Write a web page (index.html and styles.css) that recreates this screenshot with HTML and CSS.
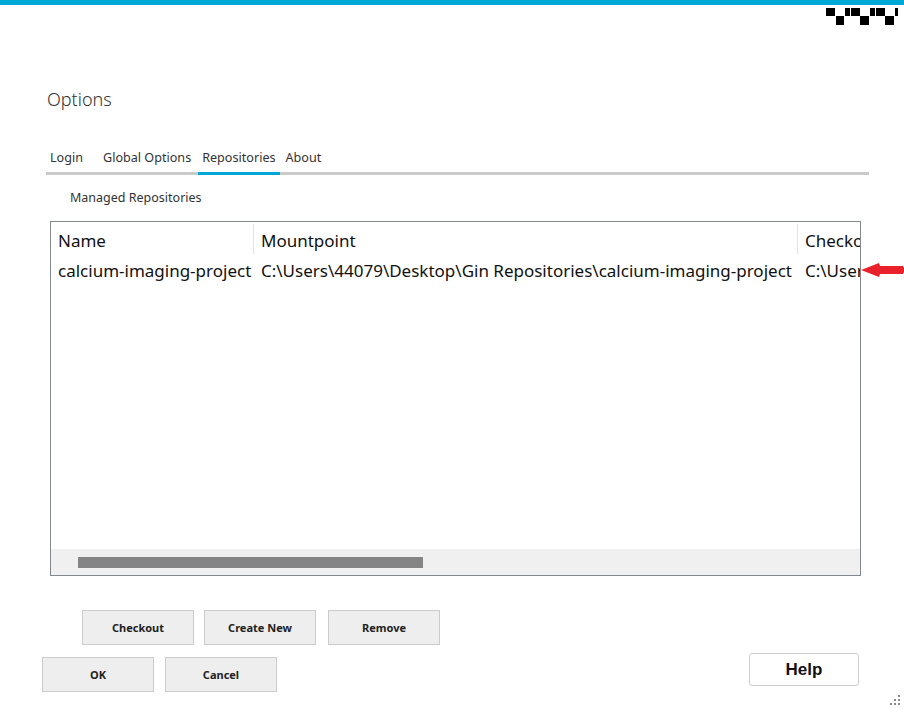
FILE: index.html
```html
<!DOCTYPE html>
<html>
<head>
<meta charset="utf-8">
<link rel="stylesheet" href="styles.css">
</head>
<body>
<div class="topbar"></div>
<svg class="winctl" width="74" height="18" viewBox="0 0 74 18">
  <g fill="#000">
    <rect x="1" y="0" width="9" height="8"/>
    <rect x="20" y="0" width="5" height="8"/>
    <rect x="26" y="0" width="9" height="8"/>
    <rect x="45" y="0" width="5" height="8"/>
    <rect x="51" y="0" width="9" height="8"/>
    <rect x="70" y="0" width="3" height="8"/>
    <rect x="11" y="8" width="8" height="9"/>
    <rect x="35" y="8" width="9" height="9"/>
    <rect x="60" y="8" width="9" height="9"/>
  </g>
</svg>
<main class="dialog">
  <h1 class="title">Options</h1>
  <nav class="tabs">
    <span class="tab t-login">Login</span>
    <span class="tab t-global">Global Options</span>
    <span class="tab t-repo active">Repositories</span>
    <span class="tab t-about">About</span>
  </nav>
  <div class="section-label">Managed Repositories</div>
  <div class="listbox">
    <div class="grid">
      <div class="hcell c1">Name</div>
      <div class="hcell c2">Mountpoint</div>
      <div class="hcell c3">Checkout</div>
      <div class="cell c1">calcium-imaging-project</div>
      <div class="cell c2">C:\Users\44079\Desktop\Gin Repositories\calcium-imaging-project</div>
      <div class="cell c3">C:\Users\44079\Desktop</div>
    </div>
    <div class="hscroll"><div class="thumb"></div></div>
  </div>
  <div class="actions">
    <button class="btn">Checkout</button>
    <button class="btn">Create New</button>
    <button class="btn b-remove">Remove</button>
  </div>
  <div class="footer">
    <div class="okcancel">
      <button class="btn">OK</button>
      <button class="btn">Cancel</button>
    </div>
    <button class="help">Help</button>
  </div>
</main>
<svg class="arrow" width="44" height="16" viewBox="0 0 44 16">
  <polygon points="0,8 18,1 19,4 42,4 43,6 43,10 42,12 19,12 18,15" fill="#e8212b"/>
</svg>
<svg class="grip" width="12" height="12" viewBox="0 0 12 12">
  <g fill="#8a8a8a">
    <rect x="8" y="0" width="2" height="2"/>
    <rect x="4" y="4" width="2" height="2"/>
    <rect x="8" y="4" width="2" height="2"/>
    <rect x="0" y="8" width="2" height="2"/>
    <rect x="4" y="8" width="2" height="2"/>
    <rect x="8" y="8" width="2" height="2"/>
  </g>
</svg>
</body>
</html>
```
FILE: styles.css
```css
html, body {
  margin: 0;
  padding: 0;
  background: #ffffff;
  width: 904px;
  height: 708px;
  overflow: hidden;
  position: relative;
  font-family: "Noto Sans", "Open Sans", sans-serif;
  color: #222;
}
.topbar {
  height: 5px;
  background: #00a8d6;
}
.winctl {
  position: absolute;
  left: 825px;
  top: 8px;
}
.dialog {
  padding: 0 0 0 42px;
  display: flex;
  flex-direction: column;
}
.title {
  margin: 82px 0 0 5px;
  font-size: 18px;
  font-weight: 300;
  color: #333;
  line-height: 24px;
  height: 24px;
}
.tabs {
  margin: 31px 0 0 4px;
  width: 823px;
  height: 30px;
  border-bottom: 3px solid #cacaca;
  display: flex;
  position: relative;
  box-sizing: content-box;
}
.tab {
  font-size: 12.6px;
  color: #333;
  line-height: 28px;
  padding: 2px 4px 0 4px;
  position: relative;
}
.t-login { margin-left: 0; }
.t-global { margin-left: 12px; }
.t-repo { margin-left: 3px; }
.t-about { margin-left: 2px; }
.tab.active::after {
  content: "";
  position: absolute;
  left: 0;
  right: 0;
  bottom: -3px;
  height: 3px;
  background: #00a8d6;
}
.section-label {
  margin: 13px 0 0 28px;
  font-size: 12.5px;
  color: #333;
  line-height: 20px;
}
.listbox {
  margin: 13px 0 0 8px;
  width: 809px;
  height: 353px;
  border: 1px solid #828790;
  display: flex;
  flex-direction: column;
  overflow: hidden;
}
.grid {
  flex: 1;
  display: grid;
  grid-template-columns: 203px 544px 200px;
  grid-template-rows: 33px 30px;
  align-content: start;
  font-size: 17px;
  color: #111;
  white-space: nowrap;
}
.hcell {
  padding-left: 7px;
  border-right: 1px solid #e3e3e3;
  margin: 2px 0 1px 0;
  padding-top: 1px;
  line-height: 31px;
  overflow: hidden;
}
.cell {
  padding-left: 7px;
  padding-top: 2px;
  line-height: 28px;
  overflow: hidden;
}
.hscroll {
  height: 26px;
  background: #f0f0f0;
  display: flex;
  align-items: center;
}
.thumb {
  margin-left: 27px;
  width: 345px;
  height: 11px;
  background: #858585;
}
.actions {
  margin: 34px 0 0 40px;
  display: flex;
  gap: 10px;
}
.b-remove { margin-left: 2px; }
.btn {
  width: 112px;
  height: 35px;
  background: #eeeeee;
  border: 1px solid #cccccc;
  font-family: "Noto Sans", "Open Sans", sans-serif;
  font-size: 11px;
  font-weight: bold;
  color: #222;
  padding: 0;
}
.footer {
  margin-top: 12px;
  display: flex;
  justify-content: space-between;
  align-items: flex-start;
  width: 817px;
}
.okcancel {
  display: flex;
  gap: 11px;
}
.help {
  margin-top: -4px;
  width: 110px;
  height: 33px;
  background: #fff;
  border: 1px solid #cccccc;
  border-radius: 3px;
  font-family: "Liberation Sans", Arial, sans-serif;
  font-weight: bold;
  font-size: 17px;
  color: #111;
  padding: 0;
}
.arrow {
  position: absolute;
  left: 861px;
  top: 262px;
}
.grip {
  position: absolute;
  left: 890px;
  top: 695px;
}
```
